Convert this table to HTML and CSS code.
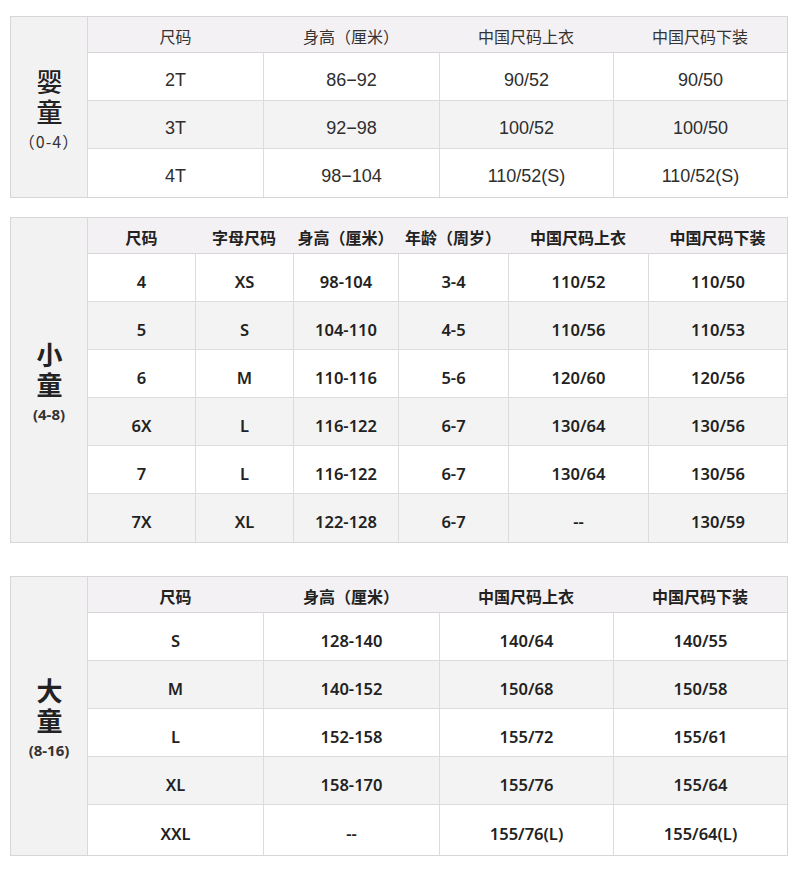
FILE: index.html
```html
<!DOCTYPE html>
<html lang="zh">
<head>
<meta charset="utf-8">
<link rel="stylesheet" href="styles.css">
</head>
<body>
<div class="page">
  <section class="chart t1">
    <div class="label"><span class="big">婴童</span><span class="age">（0-4）</span></div>
    <div class="body">
      <div class="row head c4"><div>尺码</div><div>身高（厘米）</div><div>中国尺码上衣</div><div>中国尺码下装</div></div>
      <div class="row c4"><div>2T</div><div>86−92</div><div>90/52</div><div>90/50</div></div>
      <div class="row c4 alt"><div>3T</div><div>92−98</div><div>100/52</div><div>100/50</div></div>
      <div class="row c4"><div>4T</div><div>98−104</div><div>110/52(S)</div><div>110/52(S)</div></div>
    </div>
  </section>

  <section class="chart t2 bold">
    <div class="label"><span class="big">小童</span><span class="age">(4-8)</span></div>
    <div class="body">
      <div class="row head c6"><div>尺码</div><div>字母尺码</div><div>身高（厘米）</div><div>年龄（周岁）</div><div>中国尺码上衣</div><div>中国尺码下装</div></div>
      <div class="row c6"><div>4</div><div>XS</div><div>98-104</div><div>3-4</div><div>110/52</div><div>110/50</div></div>
      <div class="row c6 alt"><div>5</div><div>S</div><div>104-110</div><div>4-5</div><div>110/56</div><div>110/53</div></div>
      <div class="row c6"><div>6</div><div>M</div><div>110-116</div><div>5-6</div><div>120/60</div><div>120/56</div></div>
      <div class="row c6 alt"><div>6X</div><div>L</div><div>116-122</div><div>6-7</div><div>130/64</div><div>130/56</div></div>
      <div class="row c6"><div>7</div><div>L</div><div>116-122</div><div>6-7</div><div>130/64</div><div>130/56</div></div>
      <div class="row c6 alt"><div>7X</div><div>XL</div><div>122-128</div><div>6-7</div><div>--</div><div>130/59</div></div>
    </div>
  </section>

  <section class="chart t3 bold">
    <div class="label"><span class="big">大童</span><span class="age">(8-16)</span></div>
    <div class="body">
      <div class="row head c4"><div>尺码</div><div>身高（厘米）</div><div>中国尺码上衣</div><div>中国尺码下装</div></div>
      <div class="row c4"><div>S</div><div>128-140</div><div>140/64</div><div>140/55</div></div>
      <div class="row c4 alt"><div>M</div><div>140-152</div><div>150/68</div><div>150/58</div></div>
      <div class="row c4"><div>L</div><div>152-158</div><div>155/72</div><div>155/61</div></div>
      <div class="row c4 alt"><div>XL</div><div>158-170</div><div>155/76</div><div>155/64</div></div>
      <div class="row c4 last"><div>XXL</div><div>--</div><div>155/76(L)</div><div>155/64(L)</div></div>
    </div>
  </section>
</div>
</body>
</html>
```

FILE: styles.css
```css
html, body {
  margin: 0;
  padding: 0;
  background: #ffffff;
}
body {
  font-family: "Liberation Sans", "Noto Sans CJK SC", sans-serif;
  color: #2e2e2e;
}
.page {
  padding: 16px 12px 0 10px;
  display: flex;
  flex-direction: column;
}
.chart {
  display: flex;
  border: 1px solid #d6d6d6;
  width: 776px;
}
.t2 { margin-top: 19px; }
.t3 { margin-top: 33px; }

.label {
  width: 77px;
  flex: none;
  background: #f3f2f3;
  border-right: 1px solid #d9d9d9;
  display: flex;
  flex-direction: column;
  align-items: center;
  justify-content: center;
  padding-top: 8px;
  box-sizing: border-box;
}
.label .big {
  writing-mode: vertical-rl;
  text-orientation: upright;
  font-family: "Noto Sans CJK SC", sans-serif;
  font-size: 26px;
  font-weight: 500;
  letter-spacing: 4px;
  line-height: 30px;
  color: #222;
}
.label .age {
  font-family: "Noto Sans CJK SC", sans-serif;
  font-size: 16px;
  line-height: 24px;
  margin-top: 0;
  color: #333;
}
.t1 .label .age { letter-spacing: 1px; }
.bold .label .big { font-weight: 700; }
.bold .label .age {
  font-weight: 700;
  font-family: "Noto Sans", "Noto Sans CJK SC", sans-serif;
  font-size: 15px;
}

.body {
  flex: 1;
  display: flex;
  flex-direction: column;
}
.row {
  display: grid;
  border-bottom: 1px solid #dcdcdc;
  height: 48px;
  box-sizing: border-box;
}
.row:last-child { border-bottom: none; }
.row.last { height: 50px; }
.c4 { grid-template-columns: 175px 176px 174px 174px; }
.c6 { grid-template-columns: 107px 98px 105px 110px 140px 139px; }

.row > div {
  display: flex;
  align-items: center;
  justify-content: center;
  font-size: 18px;
  padding-top: 7px;
  border-left: 1px solid #dcdcdc;
}
.row > div:first-child { border-left: none; }

.row.head {
  background: #f3f1f3;
  height: 36px;
  border-bottom: 1px solid #d6d6d6;
}
.row.head > div {
  border-left: none;
  padding-top: 3px;
  font-family: "Noto Sans CJK SC", sans-serif;
  font-size: 16px;
  color: #333;
}
.alt { background: #f3f3f3; }

.bold .row > div {
  font-family: "Noto Sans", "Noto Sans CJK SC", sans-serif;
  font-weight: 600;
  font-size: 16.5px;
  color: #222;
}
.bold .row.head > div {
  font-family: "Noto Sans CJK SC", sans-serif;
  font-weight: 700;
  font-size: 16px;
}
```
